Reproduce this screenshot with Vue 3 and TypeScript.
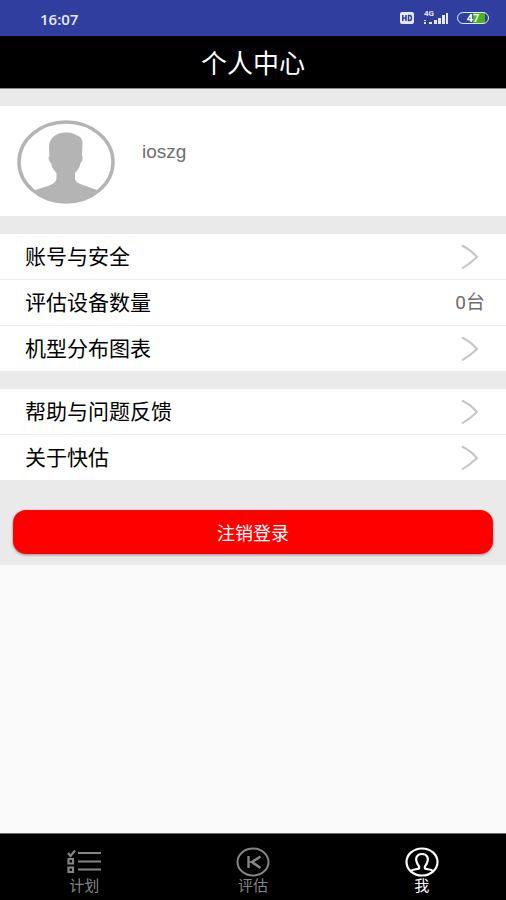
<script setup lang="ts">
import { ref } from 'vue'

interface Row {
  label: string
  value?: string
}

const groups: Row[][] = [
  [{ label: '账号与安全' }, { label: '评估设备数量', value: '0台' }, { label: '机型分布图表' }],
  [{ label: '帮助与问题反馈' }, { label: '关于快估' }],
]

const tabs = [
  { id: 'plan', label: '计划' },
  { id: 'evaluate', label: '评估' },
  { id: 'me', label: '我' },
]

const active = ref('me')
</script>

<template>
  <div class="app">
    <div class="status">
      <span class="clock">16:07</span>
      <svg class="hd" width="14" height="12" viewBox="0 0 14 12" role="img" aria-label="HD">
        <rect width="14" height="12" rx="2" fill="#e6e9f8" />
        <path d="M2.800 3v6M6 3v6M3 6h3M8.500 3.500v5h1.200q1.800 0 1.800-2.500t-1.800-2.500z" fill="none" stroke="#303f9f" stroke-width="1.500" />
      </svg>
      <div class="signal">
        <span class="net">4G</span>
        <svg width="26" height="12" viewBox="0 0 26 12" aria-hidden="true">
          <path d="M1 8h2v1H1zM1 10h2v2H1zM6 10h3v2H6zM11 8h3v4h-3zM15 6h3v6h-3zM19 3h3v9h-3zM23 1h2v11h-2z" fill="#e6e9f8" />
        </svg>
      </div>
      <div class="battery"><span class="level">47</span></div>
    </div>

    <header class="header">
      <h1 class="title">个人中心</h1>
    </header>

    <main class="content">
      <section class="profile">
        <svg class="avatar" width="98" height="84" viewBox="0 0 98 84" aria-hidden="true">
          <ellipse cx="49" cy="42" rx="47" ry="40" fill="#fff" stroke="#b4b4b4" stroke-width="3.500" />
          <path d="M49 12.500C39 12.500 32 18 32 27L32.500 36C31 36.500 31.500 41 34 43C35 48 37 50 39.500 53V58C39.500 62 36 64 31 66L18 70Q31 83 49 83T80 70L66 65C60 63 58 61 58 58V53C61 50 63 47 63.500 43C66 41 66 36 65 36L65.500 24C66 19 63 16 59 15C56 13 53 12.500 49 12.500Z" fill="#b4b4b4" />
        </svg>
        <span class="name">ioszg</span>
      </section>

      <ul v-for="(group, i) in groups" :key="i" class="group">
        <li v-for="row in group" :key="row.label" class="item">
          <button type="button" class="row">
            <span>{{ row.label }}</span>
            <span v-if="row.value" class="value">{{ row.value }}</span>
            <svg v-else class="chevron" width="18" height="26" viewBox="0 0 18 26" aria-hidden="true">
              <path d="M1 1.500Q10 6 16 13Q10 19 1 24.500" fill="none" stroke="#c6c6c6" stroke-width="2" />
            </svg>
          </button>
        </li>
      </ul>

      <div class="actions">
        <button type="button" class="logout">注销登录</button>
      </div>
    </main>

    <nav class="tabs">
      <button
        v-for="tab in tabs"
        :key="tab.id"
        type="button"
        class="tab"
        :class="{ active: tab.id === active }"
        @click="active = tab.id"
      >
        <svg width="34" height="30" viewBox="0 0 34 30" fill="none" stroke="currentColor" aria-hidden="true">
          <g v-if="tab.id === 'plan'">
            <path d="M1 6l2.500 3L8 3.500" stroke-width="2.200" />
            <path d="M11 6h23M11 14.500h23M11 22.500h23" stroke-width="2.200" />
            <path d="M1.500 12h4.500v4.500h-4.500zM1.500 20.500h4.500v4.500h-4.500z" stroke-width="2.200" />
          </g>
          <g v-else-if="tab.id === 'evaluate'">
            <ellipse cx="17" cy="15" rx="15.500" ry="13.500" stroke-width="2" />
            <path d="M12.500 9v12" stroke-width="2.400" />
            <path d="M24.500 9.500l-8.500 5.500 8.500 6" stroke-width="2.600" />
            <path d="M12.500 15h4" stroke-width="1.500" />
          </g>
          <g v-else>
            <ellipse cx="17" cy="15" rx="15.500" ry="13.500" stroke-width="2.200" />
            <path d="M6 24C8 22 12 22.500 14 21.500C15 20 14 19 12.500 17C9.500 11 12 7 17 7S24.500 11 21.500 17C20 19 19 20 20 21.500C22 22.500 26 22 28 24" stroke-width="2.200" />
          </g>
        </svg>
        <span>{{ tab.label }}</span>
      </button>
    </nav>
  </div>
</template>

<style>
body {
  margin: 0;
}
</style>

<style scoped>
.app {
  display: flex;
  flex-direction: column;
  min-height: 100vh;
  background: #fafafa;
  color: #000;
  font-family: Roboto, "Noto Sans CJK SC", sans-serif;
}

button {
  margin: 0;
  padding: 0;
  border: 0;
  background: none;
  color: inherit;
  font: inherit;
  cursor: pointer;
}

.status {
  display: flex;
  align-items: center;
  height: 36px;
  padding: 0 17px 0 40px;
  background: #303f9f;
  color: #e6e9f8;
}

.clock {
  flex: 1;
  padding-top: 2px;
  font: 600 15px/20px "Open Sans", sans-serif;
}

.signal {
  display: flex;
  flex-direction: column;
  position: relative;
  margin: 0 8px 0 9px;
}

.net {
  position: absolute;
  top: -2px;
  left: 1px;
  font: 700 8px/8px Roboto, sans-serif;
}

.battery {
  box-sizing: border-box;
  width: 32px;
  height: 12px;
  border: 1px solid #e6e9f8;
  border-radius: 6px;
  background: linear-gradient(90deg, #303f9f 50%, #49b51e 50%, #49b51e 90%, #303f9f 90%);
  text-align: center;
}

.level {
  display: block;
  color: #fff;
  font: 700 11px/12px Roboto, sans-serif;
}

.header {
  display: flex;
  align-items: center;
  justify-content: center;
  height: 52px;
  border-bottom: 1px solid #8c8c8c;
  background: #000;
  color: #fff;
}

.title {
  margin: 0;
  padding-top: 3px;
  font-size: 26px;
  font-weight: 400;
  line-height: 36px;
}

.content {
  display: flex;
  flex-direction: column;
  gap: 18px;
  padding-top: 17px;
  background: #eaeaea;
}

.profile {
  display: flex;
  align-items: flex-start;
  gap: 27px;
  padding: 14px 17px 12px;
  background: #fff;
}

.avatar {
  flex: none;
}

.name {
  padding-top: 20px;
  color: #6e6e6e;
  font: 19px/24px "Liberation Sans", sans-serif;
}

.group {
  margin: 0;
  padding: 0;
  list-style: none;
  background: #fff;
}

.item + .item {
  border-top: 1px solid #ececec;
}

.row {
  display: flex;
  align-items: center;
  justify-content: space-between;
  width: 100%;
  height: 45px;
  padding: 0 21px 0 25px;
  font-size: 21px;
  line-height: 30px;
  text-align: left;
}

.value {
  color: #6e6e6e;
  font-size: 19px;
}

.chevron {
  margin-right: 6px;
}

.actions {
  padding: 12px 13px 11px;
}

.logout {
  width: 100%;
  height: 44px;
  border-radius: 13px;
  background: #f00;
  box-shadow: 0 1px 3px rgba(0, 0, 0, 0.4);
  color: #fff;
  font-size: 18px;
}

.tabs {
  display: grid;
  grid-template-columns: repeat(3, 1fr);
  margin-top: auto;
  border-top: 1px solid #6e6e6e;
  background: #000;
}

.tab {
  display: flex;
  flex-direction: column;
  align-items: center;
  padding: 13px 0 5px;
  color: #858585;
  font-size: 15px;
  line-height: 18px;
}

.active {
  color: #fff;
}
</style>
